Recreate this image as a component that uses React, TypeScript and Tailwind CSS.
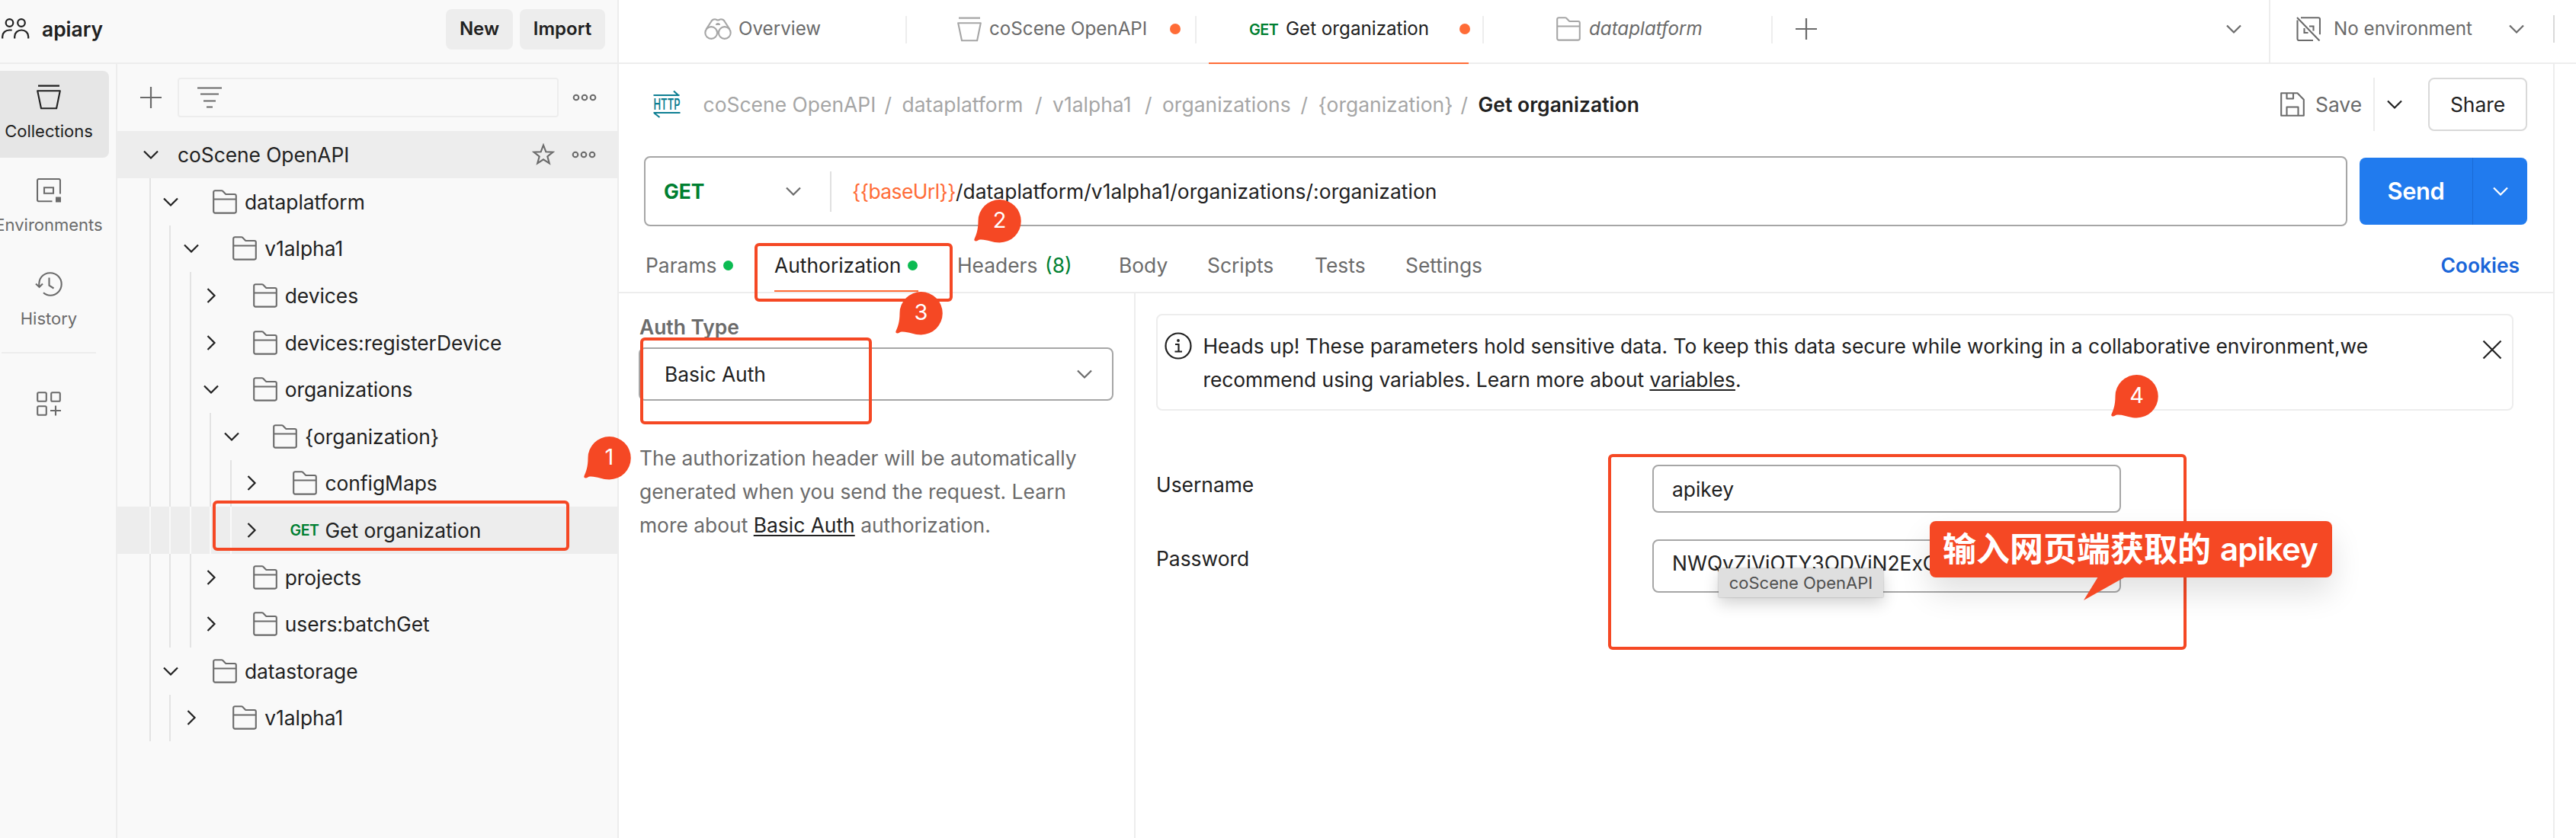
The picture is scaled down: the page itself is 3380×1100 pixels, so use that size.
import type { ReactNode } from 'react';

type IconProps = { className?: string };

function Chevron({ className = '', dir = 'down' }: IconProps & { dir?: 'down' | 'right' }) {
  return (
    <svg viewBox="0 0 20 20" className={`size-5 shrink-0 ${className}`} fill="none" stroke="currentColor" strokeWidth="2.2">
      <path d={dir === 'down' ? 'M1 5.5l9 9 9-9' : 'M5.5 1l9 9-9 9'} />
    </svg>
  );
}

function Folder({ className = '' }: IconProps) {
  return (
    <svg viewBox="0 0 32 32" className={`size-8 shrink-0 ${className}`} fill="none" stroke="currentColor" strokeWidth="2.1" strokeLinejoin="round">
      <path d="M1.2 3.2a2 2 0 0 1 2-2h8.6a2 2 0 0 1 1.4.6l3.6 3.6a2 2 0 0 0 1.4.6h10.6a2 2 0 0 1 2 2v20.6a2 2 0 0 1-2 2H3.2a2 2 0 0 1-2-2zM1.2 12.5h29.600" />
    </svg>
  );
}

function Bucket({ className = '' }: IconProps) {
  return (
    <svg viewBox="0 0 32 33" className={`h-[33px] w-8 shrink-0 ${className}`} fill="none" stroke="currentColor" strokeWidth="2.1" strokeLinejoin="round">
      <path d="M2 1.6h28M1.2 8.2h29.6l-4.7 23H6z" />
    </svg>
  );
}

function People() {
  return (
    <svg viewBox="0 0 38 28" className="h-7 w-[38px] shrink-0" fill="none" stroke="#212121" strokeWidth="2.2">
      <circle cx="11.5" cy="6" r="4.8" />
      <circle cx="27" cy="6" r="4.8" />
      <path d="M2.2 26.5v-2.5c0-5 4-8.500 9-8.500h3.500M18.200 26.500v-2.500c0-5 4-8.500 9-8.500s9 3.500 9 8.500v2.500" />
    </svg>
  );
}

function Environment() {
  return (
    <svg viewBox="0 0 32 32" className="size-8 shrink-0" fill="none" stroke="currentColor" strokeWidth="2.1">
      <path d="M20.5 30.3H3a2 2 0 0 1-2-2V3a2 2 0 0 1 2-2h26a2 2 0 0 1 2 2v17.5" />
      <path d="M10 12.3h12v7.5H10z" />
      <path d="M25 24.5h7v7h-7z" fill="currentColor" stroke="none" />
    </svg>
  );
}

function NoEnvironment() {
  return (
    <svg viewBox="0 0 32 32" className="size-8 shrink-0" fill="none" stroke="currentColor" strokeWidth="2.1">
      <path d="M22 31H3.5a2 2 0 0 1-2-2V4.5M6 1.2h23a2 2 0 0 1 2 2v20M1 1l29.5 30.5M10.5 15v6h5M17 12.5h5.500v6" />
    </svg>
  );
}

function History() {
  return (
    <svg viewBox="0 0 36 32" className="h-8 w-9 shrink-0" fill="none" stroke="currentColor" strokeWidth="2.1">
      <path d="M5.5 19.5C4 9 10 1.3 20 1.3c8 0 14.7 6.5 14.7 14.7S28 30.7 20 30.7c-3.5 0-6.5-1-9-3.4" />
      <path d="M1 15.5l4.6 4.2 4.4-4.2M18.5 7.5v10.2l6 3.800" />
    </svg>
  );
}

function Apps() {
  return (
    <svg viewBox="0 0 32 32" className="size-8 shrink-0" fill="none" stroke="currentColor" strokeWidth="2.1">
      <rect x="1.2" y="1.2" width="11.6" height="11.6" rx="1.5" />
      <rect x="19.2" y="1.2" width="11.6" height="11.6" rx="1.5" />
      <rect x="1.2" y="19.2" width="11.6" height="11.6" rx="1.5" />
      <path d="M18 25h14M25 18.5v13" />
    </svg>
  );
}

function Plus() {
  return (
    <svg viewBox="0 0 28 28" className="size-7 shrink-0" fill="none" stroke="#6b6b6b" strokeWidth="2.2">
      <path d="M0 14h28M14 0v28" />
    </svg>
  );
}

function Dots() {
  return (
    <svg viewBox="0 0 32 10" className="h-[10px] w-8 shrink-0" fill="none" stroke="#6b6b6b" strokeWidth="2.1">
      <circle cx="5" cy="5" r="3.3" />
      <circle cx="16" cy="5" r="3.3" />
      <circle cx="27" cy="5" r="3.3" />
    </svg>
  );
}

function Binoculars() {
  return (
    <svg viewBox="0 0 36 28" className="h-7 w-9 shrink-0" fill="none" stroke="#a6a6a6" strokeWidth="2.1">
      <circle cx="9.2" cy="19" r="7.9" />
      <circle cx="26.8" cy="19" r="7.9" />
      <path d="M2.5 14.5L9 4.5C10 2 12 1.3 14 1.3c2 0 2.500 1.200 4 1.200s2-1.200 4-1.200 4 .7 5 3.200l6.500 10" />
      <path d="M15 9a3 3 0 0 1 6 0z" fill="#a6a6a6" stroke="none" />
    </svg>
  );
}

function Http() {
  return (
    <svg viewBox="0 0 36 36" className="size-9 shrink-0 overflow-visible" fill="none" stroke="#0e7f93" strokeWidth="2.2">
      <path d="M.5 6h34M27 .5L33.5 6.5M.5 29h35M1.5 29.5L8.5 35" />
      <text x="0.5" y="25" fontSize="19.5" fontWeight="600" textLength="35" lengthAdjust="spacingAndGlyphs" fill="#0e7f93" stroke="none">
        HTTP
      </text>
    </svg>
  );
}

function Save() {
  return (
    <svg viewBox="0 0 32 32" className="size-8 shrink-0" fill="none" stroke="#6b6b6b" strokeWidth="2.1" strokeLinejoin="round">
      <path d="M1.2 1.2h21.3l8.3 8.6v21H1.2zM8.5 1.5v7H17v-7M8.5 30.500V19.500h15v11" />
    </svg>
  );
}

const treeGuide = 'w-[26.4px] h-full shrink-0 border-l-2';

type Row = { level: number; label: string; open?: boolean; get?: boolean };

const rows: Row[] = [
  { level: 1, label: 'dataplatform', open: true },
  { level: 2, label: 'v1alpha1', open: true },
  { level: 3, label: 'devices' },
  { level: 3, label: 'devices:registerDevice' },
  { level: 3, label: 'organizations', open: true },
  { level: 4, label: '{organization}', open: true },
  { level: 5, label: 'configMaps' },
  { level: 5, label: 'Get organization', get: true },
  { level: 3, label: 'projects' },
  { level: 3, label: 'users:batchGet' },
  { level: 1, label: 'datastorage', open: true },
  { level: 2, label: 'v1alpha1' },
];

function TreeRow({ row }: { row: Row }) {
  return (
    <div className={`flex h-[61.6px] items-center pl-[42px] ${row.get ? 'bg-[#ededed]' : ''}`}>
      {Array.from({ length: row.level }, (_, i) => (
        <span key={i} className={`${treeGuide} ${row.get ? 'border-[#f9f9f9]' : 'border-[#e3e3e3]'}`} />
      ))}
      <Chevron dir={row.open ? 'down' : 'right'} className="-ml-2" />
      <span className="ml-[41.5px] flex w-[45px] shrink-0 items-center text-[#6b6b6b]">
        {row.get ? (
          <span className="-ml-px text-[19.5px] font-semibold tracking-[-0.4px] text-[#007f31]">GET</span>
        ) : (
          <Folder className="ml-[3px]" />
        )}
      </span>
      <span className="tracking-[-0.03px]">{row.label}</span>
    </div>
  );
}

function RailItem({ icon, label, active }: { icon: ReactNode; label: string; active?: boolean }) {
  return (
    <div
      className={`-ml-[15px] flex h-[114px] w-[158px] flex-col items-center rounded-lg pt-4 ${
        active ? 'bg-[#e6e6e6] text-[#212121]' : 'text-[#6b6b6b]'
      }`}
    >
      <span className="flex h-9 items-center">{icon}</span>
      <span className="mt-[13px] text-[22px] leading-7">{label}</span>
    </div>
  );
}

function Sidebar() {
  return (
    <div className="flex w-[812px] shrink-0 flex-col border-r-2 border-[#ededed] bg-[#f9f9f9]">
      <div className="flex h-[84px] shrink-0 items-center border-b-2 border-[#ededed] pr-4 pb-[6px]">
        <span className="ml-px">
          <People />
        </span>
        <span className="ml-4 font-semibold">apiary</span>
        <span className="ml-auto flex h-[53px] w-[88px] items-center justify-center rounded-lg bg-[#ededed] text-[24px] font-semibold">
          New
        </span>
        <span className="ml-[9px] flex h-[53px] w-[112px] items-center justify-center rounded-lg bg-[#ededed] text-[24px] font-semibold">
          Import
        </span>
      </div>
      <div className="flex flex-1">
        <div className="flex w-[154px] shrink-0 flex-col gap-[9px] border-r-2 border-[#ededed] pt-[9px]">
          <RailItem active icon={<Bucket />} label="Collections" />
          <RailItem icon={<Environment />} label="Environments" />
          <RailItem icon={<History />} label="History" />
          <div className="ml-[2px] h-[2px] w-[124px] bg-[#ededed]" />
          <div className="mt-[41px] flex w-32 justify-center text-[#6b6b6b]">
            <Apps />
          </div>
        </div>
        <div className="flex flex-1 flex-col">
          <div className="flex h-[88px] shrink-0 items-center pl-[30px]">
            <Plus />
            <div className="ml-[21px] flex h-[52px] w-[500px] items-center rounded border-2 border-[#ededed] pl-6">
              <svg viewBox="0 0 32 28" className="h-7 w-8" fill="none" stroke="#6b6b6b" strokeWidth="2.2">
                <path d="M0 1.5h32M4 9.5h24M8 18.5h16M12 26.5h8" />
              </svg>
            </div>
            <span className="ml-[18px]">
              <Dots />
            </span>
          </div>
          <div className="flex h-[62px] shrink-0 items-center bg-[#ededed] pr-7 pl-[34px]">
            <Chevron />
            <span className="ml-[25px] tracking-[-0.06px]">coScene OpenAPI</span>
            <svg viewBox="0 0 30 30" className="ml-auto size-[30px]" fill="none" stroke="#6b6b6b" strokeWidth="2.1">
              <path d="M15 2.5l3.3 8.7 9.3.4-7.3 5.8 2.5 9-7.8-5.1-7.8 5.1 2.5-9-7.3-5.8 9.3-.4z" />
            </svg>
            <span className="ml-[22px]">
              <Dots />
            </span>
          </div>
          {rows.map((row, i) => (
            <TreeRow key={i} row={row} />
          ))}
        </div>
      </div>
    </div>
  );
}

function Separator() {
  return <span className="mt-[2px] ml-auto h-9 w-[2px] bg-[#ededed]" />;
}

function TabBar() {
  return (
    <div className="relative flex h-[84px] shrink-0 border-b-2 border-[#ededed] text-[24.2px] text-[#6b6b6b]">
      <div className="flex h-[76px] w-[378px] items-center pl-[112px]">
        <Binoculars />
        <span className="ml-[9px]">Overview</span>
        <Separator />
      </div>
      <div className="flex h-[76px] w-[380px] items-center pl-[66px]">
        <Bucket className="text-[#a6a6a6]" />
        <span className="ml-[10px] w-[237px]">coScene OpenAPI</span>
        <span className="size-[14px] shrink-0 rounded-full bg-[#ff6c37]" />
        <Separator />
      </div>
      <div className="flex h-[76px] w-[377px] items-center pl-[69px] text-[#212121]">
        <span className="w-[48px] pt-[2px] text-[19.8px] font-semibold tracking-[-0.5px] text-[#007f31]">GET</span>
        <span className="w-[228px]">Get organization</span>
        <span className="size-[14px] shrink-0 rounded-full bg-[#ff6c37]" />
        <Separator />
      </div>
      <div className="flex h-[76px] w-[379px] items-center pl-[95px]">
        <Folder className="text-[#a6a6a6]" />
        <span className="ml-[11px] italic">dataplatform</span>
        <Separator />
      </div>
      <div className="flex h-[76px] items-center pl-[30px]">
        <Plus />
      </div>
      <div className="ml-auto flex h-[76px] items-center pr-[36px]">
        <Chevron />
      </div>
      <div className="flex h-[82px] w-[403px] items-center border-l-2 border-[#ededed] pb-[6px] pl-[34px]">
        <NoEnvironment />
        <span className="ml-[17px] w-[230px]">No environment</span>
        <Chevron />
        <span className="mr-7 ml-auto h-9 w-[2px] bg-[#d9d9d9]" />
      </div>
      <div className="absolute top-[82px] left-[774px] h-[2px] w-[341px] bg-[#ff6c37]" />
    </div>
  );
}

function RequestHeader() {
  const crumbs = [
    { label: 'coScene OpenAPI', width: 'w-[238px]' },
    { label: 'dataplatform', width: 'w-[174.5px]' },
    { label: 'v1alpha1', width: 'w-[121px]' },
    { label: 'organizations', width: 'w-[181.5px]' },
    { label: '{organization}', width: 'w-[187px]' },
  ];
  return (
    <div className="flex h-[106px] shrink-0 items-center pl-[45px] text-[#a6a6a6]">
      <Http />
      <div className="ml-[29.5px] flex tracking-[0.05px]">
        {crumbs.map((c) => (
          <span key={c.label} className="flex">
            <span className={c.width}>{c.label}</span>
            <span className="w-[23px]">/</span>
          </span>
        ))}
        <span className="font-semibold text-[#212121]">Get organization</span>
      </div>
      <div className="ml-auto flex items-center pr-[34px] text-[#6b6b6b]">
        <Save />
        <span className="ml-[14px] w-[76px]">Save</span>
        <span className="h-[70px] w-[2px] bg-[#ededed]" />
        <Chevron className="ml-4 text-[#212121]" />
        <span className="ml-[34px] flex h-[70px] w-[130px] items-center justify-center rounded-lg border-2 border-[#d9d9d9] text-[#212121]">
          Share
        </span>
      </div>
    </div>
  );
}

function UrlRow() {
  return (
    <div className="mt-[15px] flex h-[92px] shrink-0 pl-[33px]">
      <div className="flex w-[2235px] items-center rounded-lg border-2 border-[#a6a6a6] pl-6">
        <span className="w-[160px] font-bold text-[#007f31]">GET</span>
        <Chevron className="text-[#6b6b6b]" />
        <span className="ml-[38px] h-[53px] w-[2px] bg-[#e0e0e0]" />
        <span className="ml-[27px]">
          <span className="tracking-[-0.55px] text-[#ff6c37]">{'{{baseUrl}}'}</span>
          <span className="tracking-[0.05px]">/dataplatform/v1alpha1/organizations/:organization</span>
        </span>
      </div>
      <div className="mt-[2px] ml-4 flex h-[88px] w-[220px] overflow-hidden rounded-lg bg-[#217bee] text-white">
        <span className="flex w-[148px] items-center justify-center text-[30.8px] font-semibold tracking-[-0.3px]">Send</span>
        <span className="flex flex-1 items-center justify-center border-l border-[#1a6bd4]">
          <Chevron />
        </span>
      </div>
    </div>
  );
}

function RequestTabs() {
  const dot = 'size-[13px] rounded-full bg-[#0cbb52]';
  return (
    <div className="flex h-[88px] shrink-0 items-center border-b-2 border-[#ededed] pt-4 pl-[35px] text-[#6b6b6b]">
      <span className="w-[102px]">Params</span>
      <span className={dot} />
      <span className="relative ml-[54px] flex items-center text-[#212121]">
        <span className="w-[175px]">Authorization</span>
        <span className={dot} />
        <span className="absolute top-[49px] left-0 h-[2px] w-[189px] bg-[#ff6c37]" />
      </span>
      <span className="ml-[52px] w-[115px]">Headers</span>
      <span className="w-[97px] text-[#007f31]">(8)</span>
      <span className="w-[116px]">Body</span>
      <span className="w-[141px]">Scripts</span>
      <span className="w-[119px]">Tests</span>
      <span>Settings</span>
      <span className="mr-11 ml-auto font-semibold text-[#1a66d9]">Cookies</span>
    </div>
  );
}

function AuthPanel() {
  return (
    <div className="w-[678px] shrink-0 border-r-2 border-[#ededed] pt-[29px] pl-[26px]">
      <div className="pl-px leading-[30px] font-semibold text-[#6b6b6b]">Auth Type</div>
      <div className="mt-3 flex h-[70px] w-[623px] items-center justify-between rounded-lg border-2 border-[#a6a6a6] pr-[26px] pl-[32px]">
        Basic Auth
        <Chevron className="text-[#6b6b6b]" />
      </div>
      <p className="mt-[53px] pl-px leading-[44px] whitespace-nowrap text-[#6b6b6b]">
        The authorization header will be automatically
        <br />
        generated when you send the request. Learn
        <br />
        more about{' '}
        <span className="text-[#212121] underline decoration-2 underline-offset-[3px]">Basic Auth</span> authorization.
      </p>
    </div>
  );
}

function Credentials() {
  return (
    <div className="flex-1 pl-[27px]">
      <div className="mt-[27px] flex h-[127px] w-[1781px] rounded-lg border-2 border-[#ededed] pt-[18px] pl-[9px]">
        <svg viewBox="0 0 36 36" className="mt-[4px] size-9 shrink-0" fill="none" stroke="#212121" strokeWidth="2.2">
          <circle cx="18" cy="18" r="16.5" />
          <path d="M14 16h4.5v9.5M13.5 25.5h9.5" />
          <circle cx="18" cy="11" r="1.9" fill="#212121" stroke="none" />
        </svg>
        <p className="ml-[14.5px] leading-[44px] whitespace-nowrap">
          Heads up! These parameters hold sensitive data. To keep this data secure while working in a collaborative
          environment,we
          <br />
          <span className="tracking-[-0.05px]">
            recommend using variables. Learn more about{' '}
            <span className="underline decoration-2 underline-offset-[3px]">variables</span>.
          </span>
        </p>
        <svg viewBox="0 0 26 26" className="mt-[14px] mr-[13px] ml-auto size-[26px]" fill="none" stroke="#212121" strokeWidth="2.2">
          <path d="M1.5 1.5l23 23M24.5 1.5l-23 23" />
        </svg>
      </div>
      <div className="mt-[71px] flex h-[63px] items-start">
        <span className="mt-[4px] w-[651px] leading-[44px]">Username</span>
        <div className="flex h-[63px] w-[615px] items-center rounded-lg border-2 border-[#a6a6a6] pl-6">apikey</div>
      </div>
      <div className="mt-[35px] flex h-[70px] items-start">
        <span className="mt-[3px] w-[651px] leading-[44px]">Password</span>
        <div className="flex h-[70px] w-[615px] items-center rounded-lg border-2 border-[#a6a6a6] pb-2 pl-6">
          NWQyZjViOTY3ODViN2ExO
        </div>
      </div>
    </div>
  );
}

function Badge({ n, className }: { n: number; className: string }) {
  return (
    <div className={`absolute h-[57px] w-[62px] ${className}`}>
      <svg viewBox="0 0 62 57" className="absolute inset-0" fill="#f54824">
        <path d="M33.5 0A28 28 0 0 1 33.5 56.5C24 56.5 17 52 8 52.5C6 52.6 4.5 54.5 2.5 54.5C.8 54.5 0 53.5.4 52C3 46 5.5 40 5.5 28A28 28 0 0 1 33.5 0z" />
      </svg>
      <span className="relative ml-[5px] flex h-[54px] w-[57px] items-center justify-center text-[29px] text-white">{n}</span>
    </div>
  );
}

function Highlight({ className }: { className: string }) {
  return <div className={`absolute rounded-md border-4 border-[#f54824] ${className}`} />;
}

function Annotations() {
  return (
    <>
      <Highlight className="top-[657px] left-[279px] h-[66px] w-[468px]" />
      <Highlight className="top-[319px] left-[990px] h-[77px] w-[260px]" />
      <Highlight className="top-[443px] left-[840px] h-[114px] w-[304px]" />
      <Highlight className="top-[596px] left-[2110px] h-[257px] w-[759px]" />
      <Badge n={1} className="top-[573px] left-[766px]" />
      <Badge n={2} className="top-[262px] left-[1278px]" />
      <Badge n={3} className="top-[383px] left-[1175px]" />
      <Badge n={4} className="top-[492px] left-[2770px]" />
      <div className="absolute top-[746px] left-[2255px] flex h-[38px] w-[216px] items-center justify-center bg-[#dfdfdf] text-[22px] text-[#4f4f4f] shadow-[0_8px_20px_rgba(0,0,0,0.18),0_0_2px_rgba(0,0,0,0.3)]">
        coScene OpenAPI
      </div>
      <div className="absolute top-[684px] left-[2532px] flex h-[74px] w-[528px] items-center rounded-lg bg-[#f54824] pl-[17px] text-[44px] font-bold whitespace-nowrap text-white shadow-[0_20px_40px_rgba(0,0,0,0.12)]">
        <span>输入网页端获取的</span>
        <span className="ml-[12px] text-[42px] font-semibold tracking-[-0.8px]">apikey</span>
        <svg viewBox="0 0 56 32" className="absolute top-[73px] left-[201px] h-8 w-14" fill="#f54824">
          <path d="M20 0h36L1 31z" />
        </svg>
      </div>
    </>
  );
}

export default function App() {
  return (
    <div className="relative flex h-[1100px] w-[3380px] overflow-hidden bg-white font-['Inter','Noto_Sans_CJK_SC',sans-serif] text-[26.4px] leading-[32px] text-[#212121]">
      <Sidebar />
      <div className="flex flex-1 flex-col">
        <TabBar />
        <div className="flex w-[2540px] flex-1 flex-col border-r-2 border-[#ededed]">
          <RequestHeader />
          <UrlRow />
          <RequestTabs />
          <div className="flex flex-1">
            <AuthPanel />
            <Credentials />
          </div>
        </div>
      </div>
      <Annotations />
    </div>
  );
}
